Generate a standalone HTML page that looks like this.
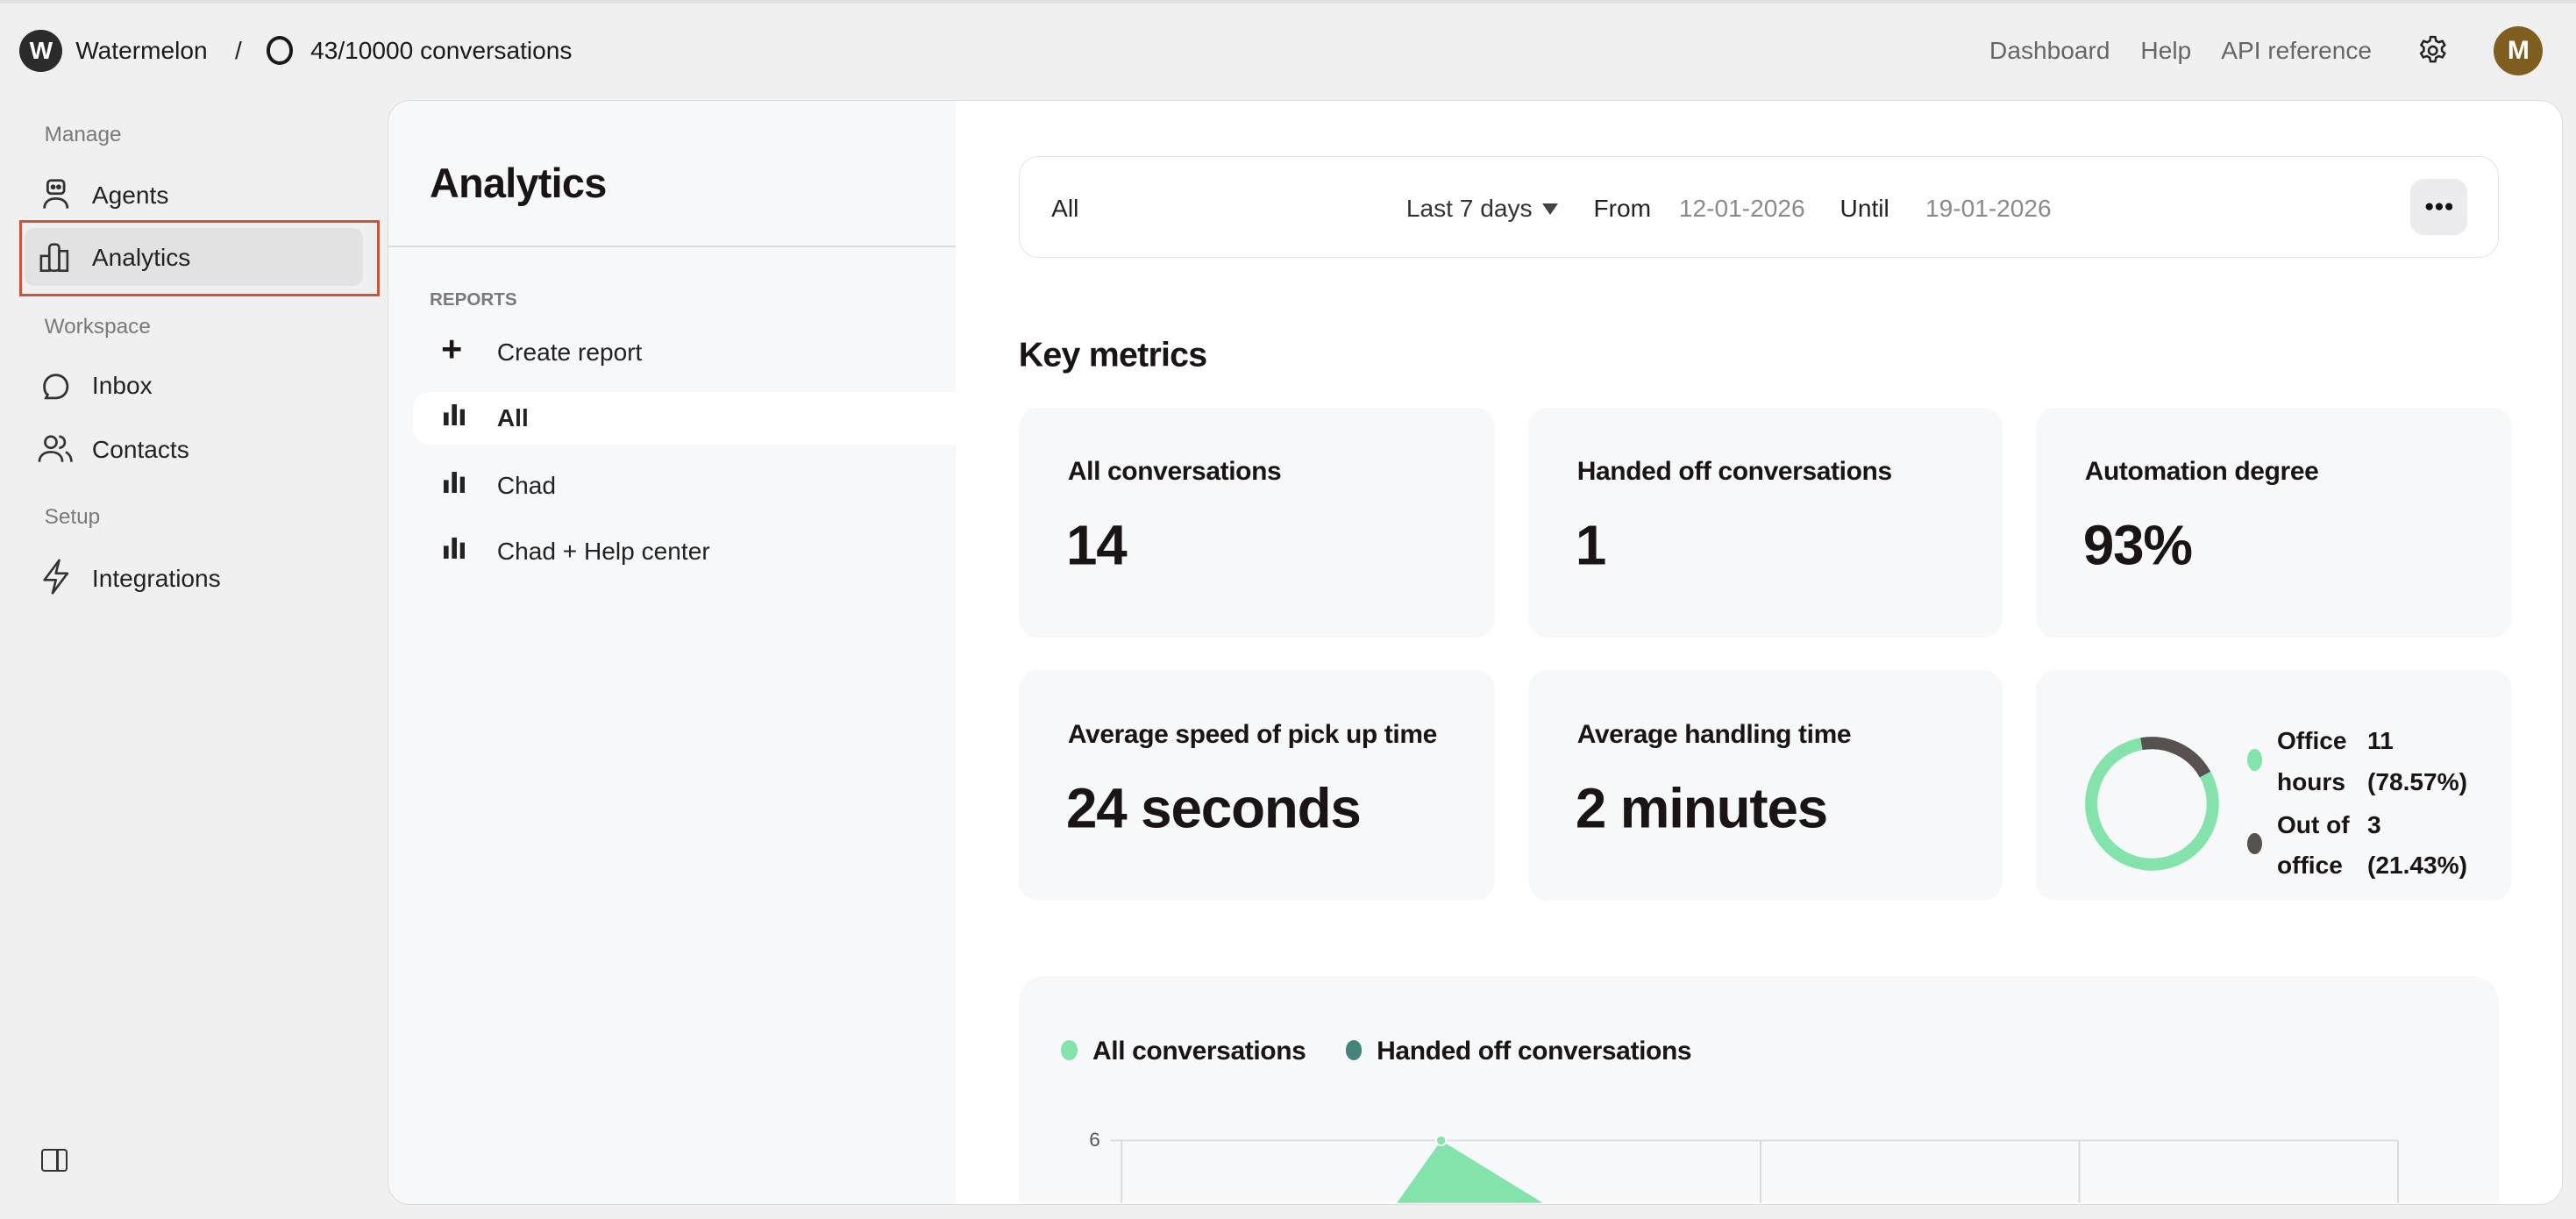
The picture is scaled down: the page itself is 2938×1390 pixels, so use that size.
<!DOCTYPE html>
<html><head><meta charset="utf-8"><style>
html,body{margin:0;padding:0;}
body{width:1568px;height:742px;zoom:1.8737;background:#f0f0f0;font-family:"Liberation Sans",sans-serif;color:#1a1414;position:relative;overflow:hidden;}
.a{position:absolute;white-space:nowrap;}
.t{transform:translateY(-50%);}
.nav{font-size:15px;color:#222;}
.sec{font-size:13px;color:#7a7a7a;}
.card{position:absolute;background:#f7f8fa;border-radius:12px;}
.lbl{position:absolute;left:30px;top:39px;transform:translateY(-50%);font-size:16px;font-weight:bold;white-space:nowrap;letter-spacing:-0.2px}
.val{position:absolute;left:29px;top:84px;transform:translateY(-50%);font-size:34px;font-weight:bold;white-space:nowrap;letter-spacing:-0.6px}
</style></head><body>
<div class="a" style="left:0;top:0;width:1568px;height:2px;background:#e0e0e0"></div>
<div class="a" style="left:12px;top:18px;width:26px;height:26px;border-radius:50%;background:#2b2b2b;color:#fff;font-weight:bold;font-size:15px;text-align:center;line-height:26px">W</div>
<div class="a t nav" style="left:46px;top:31px;color:#1a1a1a">Watermelon</div>
<div class="a t nav" style="left:143px;top:31px">/</div>
<div class="a" style="left:162px;top:22px;width:12px;height:13px;border:2.5px solid #1a1a1a;border-radius:50%"></div>
<div class="a t nav" style="left:189px;top:31px;color:#1a1a1a">43/10000 conversations</div>
<div class="a t nav" style="left:1211px;top:31px;color:#666">Dashboard</div>
<div class="a t nav" style="left:1303px;top:31px;color:#666">Help</div>
<div class="a t nav" style="left:1352px;top:31px;color:#666">API reference</div>
<svg class="a" style="left:1471px;top:21px" width="20" height="20" viewBox="0 0 24 24" fill="none" stroke="#222" stroke-width="1.6"><circle cx="12" cy="12" r="3"/><path d="M10.3 2h3.4l.6 2.8 2 1.1 2.7-.9 1.7 2.9-2.1 1.9v2.3l2.1 1.9-1.7 2.9-2.7-.9-2 1.1-.6 2.8h-3.4l-.6-2.8-2-1.1-2.7.9-1.7-2.9 2.1-1.9v-2.3L3.5 7.9l1.7-2.9 2.7.9 2-1.1z"/></svg>
<div class="a" style="left:1518px;top:16px;width:30px;height:30px;border-radius:50%;background:#7f5e20;color:#fff;font-weight:bold;font-size:16px;text-align:center;line-height:30px">M</div>
<div class="a t sec" style="left:27px;top:82px">Manage</div>
<svg class="a" style="left:24px;top:108px" width="20" height="20" viewBox="0 0 20 20" fill="none" stroke="#333" stroke-width="1.5"><rect x="5" y="2" width="10" height="8" rx="2"/><circle cx="8.3" cy="6" r=".8" fill="#333"/><circle cx="11.7" cy="6" r=".8" fill="#333"/><path d="M3 19c0-4 3-6 7-6s7 2 7 6"/></svg>
<div class="a t nav" style="left:56px;top:119px">Agents</div>
<div class="a" style="left:15px;top:139px;width:206px;height:35px;border-radius:6px;background:#e2e2e2"></div>
<div class="a" style="left:12px;top:134px;width:216px;height:43px;border:2px solid #c9553b"></div>
<svg class="a" style="left:24px;top:147px" width="20" height="20" viewBox="0 0 20 20" fill="none" stroke="#333" stroke-width="1.4"><rect x="1" y="9" width="5" height="9"/><rect x="6" y="2" width="6" height="16" rx="2"/><rect x="12" y="6" width="5" height="12"/></svg>
<div class="a t nav" style="left:56px;top:157px">Analytics</div>
<div class="a t sec" style="left:27px;top:199px">Workspace</div>
<svg class="a" style="left:24px;top:225px" width="20" height="20" viewBox="0 0 20 20" fill="none" stroke="#333" stroke-width="1.5"><path d="M10 3c4 0 7 3 7 7s-3 7-7 7H4l1-2c-1.5-1-2-3-2-5 0-4 3-7 7-7z"/></svg>
<div class="a t nav" style="left:56px;top:235px">Inbox</div>
<svg class="a" style="left:23px;top:263px" width="22" height="20" viewBox="0 0 22 20" fill="none" stroke="#333" stroke-width="1.4"><circle cx="8" cy="6" r="3.5"/><path d="M1 18c0-4 3-6 7-6s7 2 7 6"/><path d="M13 2.5a3.5 3.5 0 0 1 0 7M17 12c2 1 3.5 3 3.5 6"/></svg>
<div class="a t nav" style="left:56px;top:274px">Contacts</div>
<div class="a t sec" style="left:27px;top:315px">Setup</div>
<svg class="a" style="left:24px;top:340px" width="20" height="22" viewBox="0 0 20 22" fill="none" stroke="#333" stroke-width="1.4" stroke-linejoin="round"><path d="M12 1L3 13h7l-2 8 9-12h-7z"/></svg>
<div class="a t nav" style="left:56px;top:352px">Integrations</div>
<div class="a" style="left:25px;top:699px;width:14px;height:12px;border:1.5px solid #333;border-radius:2px"></div>
<div class="a" style="left:34px;top:700px;width:1.5px;height:12px;background:#333"></div>
<div class="a" style="left:236px;top:61px;width:1323px;height:671px;background:#fff;border:1px solid #dcdcdc;border-radius:14px;overflow:hidden">
 <div class="a" style="left:0;top:0;width:345px;height:680px;background:#f7f8fa"></div>
 <div class="a" style="left:0;top:88px;width:345px;height:1px;background:#dadde0"></div>
 <div class="a t" style="left:25px;top:50px;font-size:25px;font-weight:bold;letter-spacing:-0.4px">Analytics</div>
 <div class="a t" style="left:25px;top:121px;font-size:11px;font-weight:bold;color:#7a7a7a">REPORTS</div>
 <div class="a t" style="left:32px;top:151px;font-size:22px;font-weight:bold">+</div>
 <div class="a t nav" style="left:66px;top:153px">Create report</div>
 <div class="a" style="left:15px;top:177px;width:340px;height:32px;border-radius:10px;background:#fff"></div>
 <div class="a t nav" style="left:66px;top:193px;font-weight:bold">All</div>
 <div class="a t nav" style="left:66px;top:234px">Chad</div>
 <div class="a t nav" style="left:66px;top:274px">Chad + Help center</div>
</div>
<svg class="a" style="left:270px;top:246px" width="13" height="13"><rect x="0" y="5" width="3" height="8" fill="#222"/><rect x="5" y="0" width="3" height="13" fill="#222"/><rect x="10" y="3" width="3" height="10" fill="#222"/></svg>
<svg class="a" style="left:270px;top:287px" width="13" height="13"><rect x="0" y="5" width="3" height="8" fill="#222"/><rect x="5" y="0" width="3" height="13" fill="#222"/><rect x="10" y="3" width="3" height="10" fill="#222"/></svg>
<svg class="a" style="left:270px;top:327px" width="13" height="13"><rect x="0" y="5" width="3" height="8" fill="#222"/><rect x="5" y="0" width="3" height="13" fill="#222"/><rect x="10" y="3" width="3" height="10" fill="#222"/></svg>
<div class="a" style="left:620px;top:95px;width:900px;height:61px;border:1px solid #e4e4e4;border-radius:12px"></div>
<div class="a t nav" style="left:640px;top:127px">All</div>
<div class="a t nav" style="left:856px;top:127px;color:#333">Last 7 days</div>
<div class="a" style="left:939px;top:124px;border-left:5px solid transparent;border-right:5px solid transparent;border-top:7px solid #444"></div>
<div class="a t nav" style="left:970px;top:127px">From</div>
<div class="a t nav" style="left:1022px;top:127px;color:#8a8a8a">12-01-2026</div>
<div class="a t nav" style="left:1120px;top:127px">Until</div>
<div class="a t nav" style="left:1172px;top:127px;color:#8a8a8a">19-01-2026</div>
<div class="a" style="left:1467px;top:109px;width:35px;height:34px;border-radius:8px;background:#ececee"></div>
<svg class="a" style="left:1476px;top:123px" width="17" height="6"><circle cx="2.5" cy="3" r="2.2" fill="#111"/><circle cx="8.5" cy="3" r="2.2" fill="#111"/><circle cx="14.5" cy="3" r="2.2" fill="#111"/></svg>
<div class="a t" style="left:620px;top:216px;font-size:21px;font-weight:bold;letter-spacing:-0.4px">Key metrics</div>
<div class="card" style="left:620px;top:248px;width:290px;height:140px"><div class="lbl">All conversations</div><div class="val">14</div></div>
<div class="card" style="left:930px;top:248px;width:289px;height:140px"><div class="lbl">Handed off conversations</div><div class="val">1</div></div>
<div class="card" style="left:1239px;top:248px;width:290px;height:140px"><div class="lbl">Automation degree</div><div class="val">93%</div></div>
<div class="card" style="left:620px;top:408px;width:290px;height:140px"><div class="lbl">Average speed of pick up time</div><div class="val">24 seconds</div></div>
<div class="card" style="left:930px;top:408px;width:289px;height:140px"><div class="lbl">Average handling time</div><div class="val">2 minutes</div></div>
<div class="card" style="left:1239px;top:408px;width:290px;height:140px"></div>
<svg class="a" style="left:1266px;top:445px" width="88" height="88" viewBox="0 0 88 88"><circle cx="44" cy="44" r="37" fill="none" stroke="#84e3ab" stroke-width="7.5"/><path d="M37.6 7.6 A37 37 0 0 1 76.3 26.2" fill="none" stroke="#57514f" stroke-width="7.5"/></svg>
<div class="a" style="left:1368px;top:456px;width:9px;height:13px;border-radius:50%;background:#84e3ab"></div>
<div class="a" style="left:1368px;top:507px;width:9px;height:13px;border-radius:50%;background:#57514f"></div>
<div class="a t" style="left:1386px;top:451px;font-size:15px;font-weight:bold">Office</div>
<div class="a t" style="left:1386px;top:476px;font-size:15px;font-weight:bold">hours</div>
<div class="a t" style="left:1386px;top:502px;font-size:15px;font-weight:bold">Out of</div>
<div class="a t" style="left:1386px;top:527px;font-size:15px;font-weight:bold">office</div>
<div class="a t" style="left:1441px;top:451px;font-size:15px;font-weight:bold">11</div>
<div class="a t" style="left:1441px;top:476px;font-size:15px;font-weight:bold">(78.57%)</div>
<div class="a t" style="left:1441px;top:502px;font-size:15px;font-weight:bold">3</div>
<div class="a t" style="left:1441px;top:527px;font-size:15px;font-weight:bold">(21.43%)</div>
<div class="card" style="left:620px;top:594px;width:901px;height:137px;border-radius:16px 16px 0 0"></div>
<div class="a" style="left:646px;top:633px;width:10px;height:12px;border-radius:50%;background:#84e3ab"></div>
<div class="a t" style="left:665px;top:640px;font-size:16px;font-weight:bold;letter-spacing:-0.2px">All conversations</div>
<div class="a" style="left:819px;top:633px;width:10px;height:12px;border-radius:50%;background:#45847a"></div>
<div class="a t" style="left:838px;top:640px;font-size:16px;font-weight:bold;letter-spacing:-0.2px">Handed off conversations</div>
<div class="a t" style="left:663px;top:694px;font-size:12px;color:#555">6</div>
<svg class="a" style="left:676px;top:690px" width="790" height="42"><line x1="0" y1="4" x2="783" y2="4" stroke="#dcdde0" stroke-width="1"/><line x1="6.5" y1="4" x2="6.5" y2="42" stroke="#d8d8d8"/><line x1="395.5" y1="4" x2="395.5" y2="42" stroke="#d8d8d8"/><line x1="589.5" y1="4" x2="589.5" y2="42" stroke="#d8d8d8"/><line x1="783.5" y1="4" x2="783.5" y2="42" stroke="#d8d8d8"/><polygon points="174,42 201,4 263,42" fill="#84e3ab"/><circle cx="201" cy="4" r="3" fill="#84e3ab" stroke="#fff" stroke-width="1"/></svg>
</body></html>
